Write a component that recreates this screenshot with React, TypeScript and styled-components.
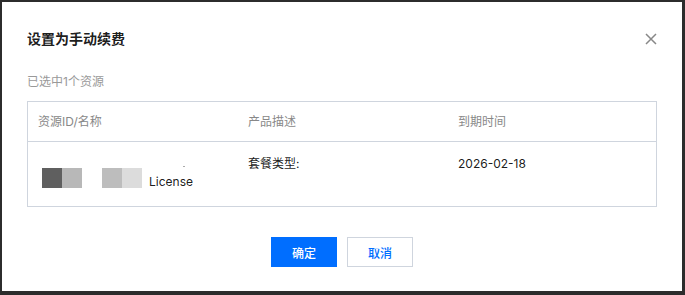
import React from "react";
import styled, { createGlobalStyle } from "styled-components";

const GlobalStyle = createGlobalStyle`
  html, body {
    margin: 0;
    padding: 0;
    background: #2c2c2c;
  }
  body {
    font-family: Inter, "Noto Sans CJK SC", sans-serif;
    -webkit-font-smoothing: antialiased;
  }
`;

const Dialog = styled.div`
  box-sizing: border-box;
  margin: 2px 3px 0 2px;
  width: 680px;
  height: 289px;
  background: #fff;
  padding: 26px 25px 0 25px;
  display: flex;
  flex-direction: column;
`;

const Header = styled.div`
  display: flex;
  align-items: center;
  justify-content: space-between;
  height: 22px;
`;

const Title = styled.h3`
  margin: 0;
  font-size: 14px;
  line-height: 22px;
  font-weight: 700;
  color: rgba(0, 0, 0, 0.9);
`;

const CloseButton = styled.button`
  border: 0;
  padding: 0;
  background: none;
  width: 12px;
  height: 12px;
  display: grid;
  place-items: center;
  cursor: pointer;
`;

const Selected = styled.div`
  margin-top: 23px;
  font-size: 12px;
  line-height: 18px;
  color: #999;
`;

const Table = styled.div`
  margin-top: 10px;
  border: 1px solid #cfd5de;
`;

const Row = styled.div<{ $head?: boolean }>`
  display: grid;
  grid-template-columns: 210px 210px 1fr;
  align-items: ${p => (p.$head ? "center" : "start")};
  height: ${p => (p.$head ? "39px" : "64px")};
  border-bottom: ${p => (p.$head ? "1px solid #cfd5de" : "none")};
`;

const Cell = styled.div<{ $head?: boolean }>`
  padding: ${p => (p.$head ? "0 10px" : "13px 10px 0")};
  font-size: 12px;
  line-height: 18px;
  color: ${p => (p.$head ? "#888" : "rgba(0, 0, 0, 0.9)")};
`;

const SpeckLine = styled.div`
  height: 13px;
  position: relative;
`;

const Speck = styled.span`
  position: absolute;
  left: 145px;
  top: 11px;
  width: 2px;
  height: 1px;
  background: #aaa;
`;

const NameLine = styled.div`
  display: flex;
  align-items: flex-end;
  padding-left: 4px;
`;

const Redact = styled.span<{ $c: string }>`
  display: inline-block;
  width: 20px;
  height: 20px;
  background: ${p => p.$c};
`;

const RedactGroup = styled.span<{ $gap: number }>`
  display: flex;
  margin-right: ${p => p.$gap}px;
`;

const NameText = styled.span`
  line-height: 12px;
`;

const Footer = styled.div`
  margin-top: 30px;
  display: flex;
  justify-content: center;
  gap: 10px;
`;

const Button = styled.button<{ $primary?: boolean }>`
  box-sizing: border-box;
  height: 30px;
  min-width: 66px;
  padding: 0 20px;
  font-family: inherit;
  font-size: 12px;
  font-weight: 500;
  border: 1px solid ${p => (p.$primary ? "#006eff" : "#cfd5de")};
  background: ${p => (p.$primary ? "#006eff" : "#fff")};
  color: ${p => (p.$primary ? "#fff" : "#006eff")};
  cursor: pointer;
`;

export default function App() {
  return (
    <>
      <GlobalStyle />
      <Dialog>
        <Header>
          <Title>设置为手动续费</Title>
          <CloseButton aria-label="关闭">
            <svg width="12" height="12" viewBox="0 0 12 12">
              <path
                d="M1 1 L11 11 M11 1 L1 11"
                stroke="#888"
                strokeWidth="1.5"
                fill="none"
              />
            </svg>
          </CloseButton>
        </Header>
        <Selected>已选中1个资源</Selected>
        <Table>
          <Row $head>
            <Cell $head>资源ID/名称</Cell>
            <Cell $head>产品描述</Cell>
            <Cell $head>到期时间</Cell>
          </Row>
          <Row>
            <Cell>
              <SpeckLine>
                <Speck />
              </SpeckLine>
              <NameLine>
                <RedactGroup $gap={20}>
                  <Redact $c="#5f5f5f" />
                  <Redact $c="#b8b8b8" />
                </RedactGroup>
                <RedactGroup $gap={7}>
                  <Redact $c="#bdbdbd" />
                  <Redact $c="#dcdcdc" />
                </RedactGroup>
                <NameText>License</NameText>
              </NameLine>
            </Cell>
            <Cell>套餐类型:</Cell>
            <Cell>2026-02-18</Cell>
          </Row>
        </Table>
        <Footer>
          <Button $primary>确定</Button>
          <Button>取消</Button>
        </Footer>
      </Dialog>
    </>
  );
}
